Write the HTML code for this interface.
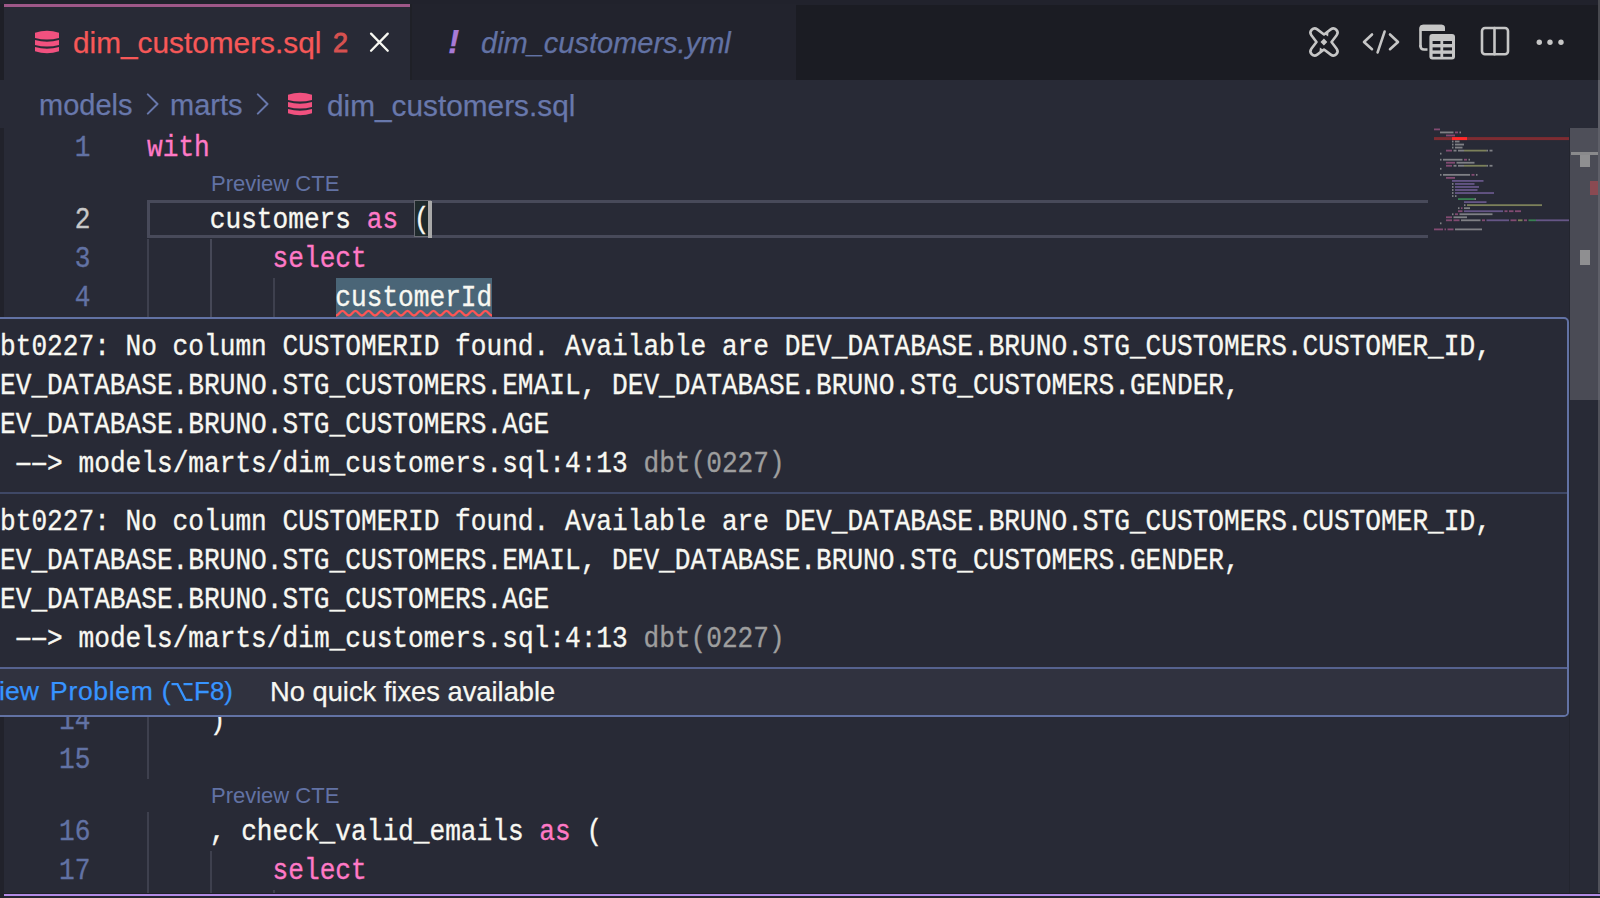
<!DOCTYPE html>
<html><head><meta charset="utf-8">
<style>
html,body{margin:0;padding:0;}
body{width:1600px;height:898px;overflow:hidden;position:relative;background:#282a36;font-family:"Liberation Sans",sans-serif;}
.a{position:absolute;}
.t{position:absolute;white-space:pre;line-height:39px;-webkit-text-stroke:0.25px currentColor;}
.m{position:absolute;font-family:"Liberation Mono",monospace;font-size:30px;line-height:39px;white-space:pre;color:#f8f8f2;transform:scaleX(0.8717);transform-origin:0 0;margin-top:1px;-webkit-text-stroke:0.35px currentColor;}
.k{color:#ff79c6;}
.dd{display:inline-block;transform:scaleX(1.2);}
.ln{position:absolute;left:59px;font-family:"Liberation Mono",monospace;font-size:30px;line-height:39px;white-space:pre;color:#6272a4;transform:scaleX(0.8717);transform-origin:0 0;margin-top:1px;-webkit-text-stroke:0.35px currentColor;}
.g{position:absolute;width:2px;background:#3e404e;}
.cl{position:absolute;left:211px;font-size:22px;line-height:33px;color:#6272a4;white-space:pre;}
</style></head>
<body>
<!-- top band -->
<div class="a" style="left:0;top:0;width:1600px;height:4px;background:#21222c"></div>
<!-- tab bar -->
<div class="a" style="left:0;top:4px;width:1600px;height:76px;background:#1b1c23"></div>
<div class="a" style="left:0;top:4px;width:4px;height:76px;background:#1e1f27"></div>
<!-- active tab -->
<div class="a" style="left:4px;top:4px;width:406px;height:76px;background:#282a36"></div>
<div class="a" style="left:4px;top:4px;width:406px;height:3px;background:#9e5788"></div>
<div class="a" style="left:410px;top:4px;width:2px;height:76px;background:#1f2027"></div>
<!-- inactive tab -->
<div class="a" style="left:412px;top:4px;width:384px;height:76px;background:#22232d"></div>
<div class="a" style="left:796px;top:4px;width:804px;height:1px;background:#21222c"></div>

<!-- tab 1 content -->
<svg class="a" style="left:35px;top:30px" width="24" height="24" viewBox="0 0 24 24">
<g fill="#f1517f"><path d="M0,2.8 Q12,-1.2 24,2.8 V7.9 Q12,11.3 0,7.9 Z"/><path d="M0,10.1 Q12,13.5 24,10.1 V14.9 Q12,18.3 0,14.9 Z"/><path d="M0,17.1 Q12,20.5 24,17.1 V21.2 Q12,25.2 0,21.2 Z"/></g></svg>
<div class="t" id="tab1" style="left:73px;top:23px;font-size:29.8px;color:#f65858">dim_customers.sql</div>
<div class="t" id="tab1n" style="left:333px;top:24px;font-size:27px;-webkit-text-stroke:0.9px currentColor;color:#d65150">2</div>
<svg class="a" style="left:369px;top:32px" width="21" height="21" viewBox="0 0 21 21"><path d="M2.05,1.65 L18.75,18.75 M18.75,1.65 L2.05,18.75" stroke="#f8f8f2" stroke-width="2.3" stroke-linecap="round"/></svg>

<!-- tab 2 content -->
<div class="t" id="excl" style="left:448px;top:22px;font-size:34px;font-weight:bold;font-style:italic;color:#a87ad6">!</div>
<div class="t" id="tab2" style="left:481px;top:23.5px;font-size:29px;font-style:italic;color:#6272a4">dim_customers.yml</div>

<!-- toolbar icons -->
<svg class="a" style="left:1300px;top:20px" width="290" height="46" viewBox="0 0 290 46">
<g fill="none" stroke="#c6c6c6" stroke-width="2.6" stroke-linecap="round" stroke-linejoin="round">
<path transform="translate(8.5,6.5)" d="M15.50,8.00 L22.26,2.86 A4.2,4.2 0 0 1 28.14,8.74 L23.00,15.50 L28.14,22.26 A4.2,4.2 0 0 1 22.26,28.14 L15.50,23.00 L8.74,28.14 A4.2,4.2 0 0 1 2.86,22.26 L8.00,15.50 L2.86,8.74 A4.2,4.2 0 0 1 8.74,2.86 L15.50,8.00 Z"/>
<path d="M72,14.5 L64,22 L72,29.2 M84.6,11.6 L77.6,32.4 M90,14.5 L98,22 L90,29.2"/>
<path d="M120.5,26 V9 Q120.5,6 123.5,6 H142"/><path d="M120.5,26 Q120.5,29.5 124,29.5 H128"/>
<rect x="182" y="8" width="26" height="26.2" rx="3"/>
<path d="M194.5,8 V34.2"/>
</g>
<g fill="#c6c6c6">
<path transform="translate(8.5,6.5)" d="M15.4,12.1 L18.8,15.5 L15.4,18.9 L12,15.5 Z M16,7.4 L20,5.8 L19.6,10 Z M15,23.6 L11,25.2 L11.4,21 Z"/>
<path d="M119.8,8 Q119.8,4.8 123,4.8 H141.5 Q145,4.8 145,8 V11 H119.8 Z"/>
<rect x="127.5" y="12.5" width="29" height="28.5" rx="4" fill="#1b1c23"/>
<rect x="129.4" y="14.1" width="25.6" height="25.5" rx="3"/>
<circle cx="239.3" cy="22.2" r="2.7"/><circle cx="250" cy="22.2" r="2.7"/><circle cx="261" cy="22.2" r="2.7"/>
</g>
<g fill="#1b1c23">
<rect x="132.6" y="21" width="7.8" height="3"/><rect x="143.2" y="21" width="8.8" height="3"/>
<rect x="132.6" y="27.4" width="7.8" height="3"/><rect x="143.2" y="27.4" width="8.8" height="3"/>
<rect x="132.6" y="33.8" width="7.8" height="3"/><rect x="143.2" y="33.8" width="8.8" height="3"/>
</g>
</svg>

<!-- breadcrumbs -->
<div class="t" id="bc1" style="left:39px;top:86px;font-size:29px;color:#6878ac">models</div>
<div class="t" id="bc2" style="left:170px;top:86px;font-size:29px;color:#6878ac">marts</div>
<div class="t" id="bc3" style="left:327px;top:86px;font-size:29.8px;color:#6878ac">dim_customers.sql</div>
<svg class="a" style="left:140px;top:88px" width="140" height="32" viewBox="0 0 140 32">
<path d="M7.8,6.4 L17.5,16 L7.8,25.6 M117.8,6.4 L127.5,16 L117.8,25.6" fill="none" stroke="#6878ac" stroke-width="2" stroke-linecap="round" stroke-linejoin="round"/></svg>
<svg class="a" style="left:288px;top:92px" width="24" height="24" viewBox="0 0 24 24">
<g fill="#f1517f"><path d="M0,2.8 Q12,-1.2 24,2.8 V7.9 Q12,11.3 0,7.9 Z"/><path d="M0,10.1 Q12,13.5 24,10.1 V14.9 Q12,18.3 0,14.9 Z"/><path d="M0,17.1 Q12,20.5 24,17.1 V21.2 Q12,25.2 0,21.2 Z"/></g></svg>

<!-- editor left strip -->
<div class="a" style="left:0;top:128px;width:4px;height:770px;background:#21222b"></div>

<!-- current line box -->
<div class="a" style="left:147px;top:200px;width:1278px;height:32px;border:3px solid #484a5a;border-top-width:3.5px;border-right:none"></div>

<!-- indent guides -->
<div class="g" style="left:147px;top:239px;height:78px"></div>
<div class="g" style="left:210px;top:239px;height:78px;background:#464857"></div>
<div class="g" style="left:273px;top:278px;height:39px"></div>
<div class="g" style="left:147px;top:701px;height:78px"></div>
<div class="g" style="left:147px;top:812px;height:86px"></div>
<div class="g" style="left:210px;top:851px;height:47px"></div>
<div class="g" style="left:273px;top:890px;height:8px"></div>

<!-- selection -->
<div class="a" style="left:336px;top:278px;width:156px;height:39px;background:#4a6577"></div>
<!-- bracket match + cursor -->
<div class="a" style="left:414px;top:200px;width:15px;height:35px;border:1px solid #6a6b73;background:#1f2a2c"></div>
<div class="a" style="left:428px;top:201px;width:4px;height:37px;background:#a9a9a9"></div>

<!-- line numbers -->
<div class="ln" style="top:128px"> 1</div>
<div class="ln" style="top:200px;color:#c8c8c8"> 2</div>
<div class="ln" style="top:239px"> 3</div>
<div class="ln" style="top:278px"> 4</div>
<div class="ln" style="top:701px">14</div>
<div class="ln" style="top:740px">15</div>
<div class="ln" style="top:812px">16</div>
<div class="ln" style="top:851px">17</div>

<!-- code -->
<div class="m" style="left:147px;top:128px"><span class="k">with</span></div>
<div class="cl" style="top:167px">Preview CTE</div>
<div class="m" style="left:147px;top:200px">    customers <span class="k">as</span> (</div>
<div class="m" style="left:147px;top:239px">        <span class="k">select</span></div>
<div class="m" style="left:147px;top:278px">            customerId</div>
<div class="m" style="left:147px;top:701px">    )</div>
<div class="cl" style="top:779px">Preview CTE</div>
<div class="m" style="left:147px;top:812px">    , check_valid_emails <span class="k">as</span> (</div>
<div class="m" style="left:147px;top:851px">        <span class="k">select</span></div>

<!-- squiggle -->
<svg class="a" style="left:336px;top:309px" width="156" height="9" viewBox="0 0 156 9">
<path d="M0,6.5 C2.6,6.5 3.9,1.8 6.5,1.8 C9.1,1.8 10.4,6.5 13.0,6.5 C15.6,6.5 16.9,1.8 19.5,1.8 C22.1,1.8 23.4,6.5 26.0,6.5 C28.6,6.5 29.9,1.8 32.5,1.8 C35.1,1.8 36.4,6.5 39.0,6.5 C41.6,6.5 42.9,1.8 45.5,1.8 C48.1,1.8 49.4,6.5 52.0,6.5 C54.6,6.5 55.9,1.8 58.5,1.8 C61.1,1.8 62.4,6.5 65.0,6.5 C67.6,6.5 68.9,1.8 71.5,1.8 C74.1,1.8 75.4,6.5 78.0,6.5 C80.6,6.5 81.9,1.8 84.5,1.8 C87.1,1.8 88.4,6.5 91.0,6.5 C93.6,6.5 94.9,1.8 97.5,1.8 C100.1,1.8 101.4,6.5 104.0,6.5 C106.6,6.5 107.9,1.8 110.5,1.8 C113.1,1.8 114.4,6.5 117.0,6.5 C119.6,6.5 120.9,1.8 123.5,1.8 C126.1,1.8 127.4,6.5 130.0,6.5 C132.6,6.5 133.9,1.8 136.5,1.8 C139.1,1.8 140.4,6.5 143.0,6.5 C145.6,6.5 146.9,1.8 149.5,1.8 C152.1,1.8 153.4,6.5 156.0,6.5" fill="none" stroke="#ff5555" stroke-width="2.3"/></svg>

<!--MINIMAP--><svg class="a" style="left:0;top:0" width="1600" height="898" viewBox="0 0 1600 898"><rect x="1434" y="137.09" width="135" height="3" fill="#7e2c32"/><rect x="1452" y="137.09" width="15" height="3" fill="#ff2a2a"/><rect x="1434.0" y="128.50" width="6.0" height="1.8" fill="#ff79c6" opacity="0.42"/><rect x="1440.0" y="131.53" width="13.5" height="1.8" fill="#f8f8f2" opacity="0.42"/><rect x="1455.0" y="131.53" width="3.0" height="1.8" fill="#ff79c6" opacity="0.42"/><rect x="1459.5" y="131.53" width="1.5" height="1.8" fill="#f8f8f2" opacity="0.42"/><rect x="1446.0" y="134.56" width="9.0" height="1.8" fill="#ff79c6" opacity="0.42"/><rect x="1452.0" y="140.62" width="1.5" height="1.8" fill="#f8f8f2" opacity="0.42"/><rect x="1455.0" y="140.62" width="4.5" height="1.8" fill="#f8f8f2" opacity="0.42"/><rect x="1452.0" y="143.65" width="1.5" height="1.8" fill="#f8f8f2" opacity="0.42"/><rect x="1455.0" y="143.65" width="9.0" height="1.8" fill="#f8f8f2" opacity="0.42"/><rect x="1452.0" y="146.68" width="1.5" height="1.8" fill="#f8f8f2" opacity="0.42"/><rect x="1455.0" y="146.68" width="7.5" height="1.8" fill="#f8f8f2" opacity="0.42"/><rect x="1446.0" y="149.71" width="6.0" height="1.8" fill="#ff79c6" opacity="0.42"/><rect x="1453.5" y="149.71" width="3.0" height="1.8" fill="#f8f8f2" opacity="0.42"/><rect x="1458.0" y="149.71" width="6.0" height="1.8" fill="#f8f8f2" opacity="0.42"/><rect x="1464.0" y="149.71" width="22.5" height="1.8" fill="#f1fa8c" opacity="0.42"/><rect x="1486.5" y="149.71" width="1.5" height="1.8" fill="#f8f8f2" opacity="0.42"/><rect x="1489.5" y="149.71" width="3.0" height="1.8" fill="#f8f8f2" opacity="0.42"/><rect x="1440.0" y="152.74" width="1.5" height="1.8" fill="#f8f8f2" opacity="0.42"/><rect x="1440.0" y="158.80" width="1.5" height="1.8" fill="#f8f8f2" opacity="0.42"/><rect x="1443.0" y="158.80" width="19.5" height="1.8" fill="#f8f8f2" opacity="0.42"/><rect x="1464.0" y="158.80" width="3.0" height="1.8" fill="#ff79c6" opacity="0.42"/><rect x="1468.5" y="158.80" width="1.5" height="1.8" fill="#f8f8f2" opacity="0.42"/><rect x="1446.0" y="161.83" width="9.0" height="1.8" fill="#ff79c6" opacity="0.42"/><rect x="1456.5" y="161.83" width="18.0" height="1.8" fill="#f8f8f2" opacity="0.42"/><rect x="1446.0" y="164.86" width="6.0" height="1.8" fill="#ff79c6" opacity="0.42"/><rect x="1453.5" y="164.86" width="3.0" height="1.8" fill="#f8f8f2" opacity="0.42"/><rect x="1458.0" y="164.86" width="6.0" height="1.8" fill="#f8f8f2" opacity="0.42"/><rect x="1464.0" y="164.86" width="22.5" height="1.8" fill="#f1fa8c" opacity="0.42"/><rect x="1486.5" y="164.86" width="1.5" height="1.8" fill="#f8f8f2" opacity="0.42"/><rect x="1489.5" y="164.86" width="3.0" height="1.8" fill="#f8f8f2" opacity="0.42"/><rect x="1440.0" y="167.89" width="1.5" height="1.8" fill="#f8f8f2" opacity="0.42"/><rect x="1440.0" y="173.95" width="1.5" height="1.8" fill="#f8f8f2" opacity="0.42"/><rect x="1443.0" y="173.95" width="27.0" height="1.8" fill="#f8f8f2" opacity="0.42"/><rect x="1471.5" y="173.95" width="3.0" height="1.8" fill="#ff79c6" opacity="0.42"/><rect x="1476.0" y="173.95" width="1.5" height="1.8" fill="#f8f8f2" opacity="0.42"/><rect x="1446.0" y="176.98" width="9.0" height="1.8" fill="#ff79c6" opacity="0.42"/><rect x="1452.0" y="180.01" width="31.5" height="1.8" fill="#bd93f9" opacity="0.42"/><rect x="1452.0" y="183.04" width="1.5" height="1.8" fill="#f8f8f2" opacity="0.42"/><rect x="1455.0" y="183.04" width="19.5" height="1.8" fill="#bd93f9" opacity="0.42"/><rect x="1452.0" y="186.07" width="1.5" height="1.8" fill="#f8f8f2" opacity="0.42"/><rect x="1455.0" y="186.07" width="24.0" height="1.8" fill="#bd93f9" opacity="0.42"/><rect x="1452.0" y="189.10" width="1.5" height="1.8" fill="#f8f8f2" opacity="0.42"/><rect x="1455.0" y="189.10" width="22.5" height="1.8" fill="#bd93f9" opacity="0.42"/><rect x="1452.0" y="192.13" width="1.5" height="1.8" fill="#f8f8f2" opacity="0.42"/><rect x="1455.0" y="192.13" width="39.0" height="1.8" fill="#bd93f9" opacity="0.42"/><rect x="1452.0" y="195.16" width="1.5" height="1.8" fill="#f8f8f2" opacity="0.42"/><rect x="1455.0" y="195.16" width="1.5" height="1.8" fill="#f8f8f2" opacity="0.42"/><rect x="1458.0" y="198.19" width="16.5" height="1.8" fill="#50fa7b" opacity="0.42"/><rect x="1474.5" y="198.19" width="1.5" height="1.8" fill="#f8f8f2" opacity="0.42"/><rect x="1464.0" y="201.22" width="22.5" height="1.8" fill="#bd93f9" opacity="0.42"/><rect x="1464.0" y="204.25" width="1.5" height="1.8" fill="#f8f8f2" opacity="0.42"/><rect x="1467.0" y="204.25" width="75.0" height="1.8" fill="#f1fa8c" opacity="0.42"/><rect x="1458.0" y="207.28" width="1.5" height="1.8" fill="#f8f8f2" opacity="0.42"/><rect x="1461.0" y="207.28" width="1.5" height="1.8" fill="#ff79c6" opacity="0.42"/><rect x="1464.0" y="207.28" width="6.0" height="1.8" fill="#f8f8f2" opacity="0.42"/><rect x="1458.0" y="210.31" width="4.5" height="1.8" fill="#ff79c6" opacity="0.42"/><rect x="1464.0" y="210.31" width="39.0" height="1.8" fill="#bd93f9" opacity="0.42"/><rect x="1504.5" y="210.31" width="3.0" height="1.8" fill="#ff79c6" opacity="0.42"/><rect x="1509.0" y="210.31" width="4.5" height="1.8" fill="#ff79c6" opacity="0.42"/><rect x="1515.0" y="210.31" width="6.0" height="1.8" fill="#ff79c6" opacity="0.42"/><rect x="1452.0" y="213.34" width="1.5" height="1.8" fill="#f8f8f2" opacity="0.42"/><rect x="1455.0" y="213.34" width="3.0" height="1.8" fill="#ff79c6" opacity="0.42"/><rect x="1459.5" y="213.34" width="33.0" height="1.8" fill="#f8f8f2" opacity="0.42"/><rect x="1446.0" y="216.37" width="6.0" height="1.8" fill="#ff79c6" opacity="0.42"/><rect x="1453.5" y="216.37" width="13.5" height="1.8" fill="#f8f8f2" opacity="0.42"/><rect x="1446.0" y="219.40" width="6.0" height="1.8" fill="#ff79c6" opacity="0.42"/><rect x="1453.5" y="219.40" width="6.0" height="1.8" fill="#ff79c6" opacity="0.42"/><rect x="1461.0" y="219.40" width="19.5" height="1.8" fill="#f8f8f2" opacity="0.42"/><rect x="1482.0" y="219.40" width="3.0" height="1.8" fill="#ff79c6" opacity="0.42"/><rect x="1486.5" y="219.40" width="22.5" height="1.8" fill="#bd93f9" opacity="0.42"/><rect x="1510.5" y="219.40" width="6.0" height="1.8" fill="#ff79c6" opacity="0.42"/><rect x="1518.0" y="219.40" width="4.5" height="1.8" fill="#f1fa8c" opacity="0.42"/><rect x="1524.0" y="219.40" width="3.0" height="1.8" fill="#ff79c6" opacity="0.42"/><rect x="1528.5" y="219.40" width="7.5" height="1.8" fill="#50fa7b" opacity="0.42"/><rect x="1536.0" y="219.40" width="33.0" height="1.8" fill="#bd93f9" opacity="0.42"/><rect x="1440.0" y="222.43" width="1.5" height="1.8" fill="#f8f8f2" opacity="0.42"/><rect x="1434.0" y="228.49" width="9.0" height="1.8" fill="#ff79c6" opacity="0.42"/><rect x="1444.5" y="228.49" width="1.5" height="1.8" fill="#ff79c6" opacity="0.42"/><rect x="1447.5" y="228.49" width="6.0" height="1.8" fill="#ff79c6" opacity="0.42"/><rect x="1455.0" y="228.49" width="27.0" height="1.8" fill="#f8f8f2" opacity="0.42"/></svg><!--/MINIMAP-->

<!-- scrollbar -->
<div class="a" style="left:1569px;top:128px;width:1px;height:770px;background:#23252f"></div>
<div class="a" style="left:1570px;top:128px;width:28px;height:272px;background:#4a4b55"></div>
<div class="a" style="left:1570px;top:128px;width:28px;height:24px;background:#4e4f59"></div>
<div class="a" style="left:1571px;top:152px;width:27px;height:3px;background:#8a8a8c"></div>
<div class="a" style="left:1580px;top:155px;width:10px;height:12px;background:#8f8f91"></div>
<div class="a" style="left:1590px;top:181px;width:8px;height:14px;background:#8a4a52"></div>
<div class="a" style="left:1580px;top:250px;width:10px;height:15px;background:#8f8f91"></div>
<div class="a" style="left:1598px;top:0;width:2px;height:80px;background:#47484e"></div>
<div class="a" style="left:1598px;top:80px;width:2px;height:320px;background:#5e5f68"></div>
<div class="a" style="left:1598px;top:400px;width:2px;height:498px;background:#50515a"></div>

<!-- hover widget -->
<div class="a" style="left:-10px;top:317px;width:1574.5px;height:396px;background:#282a36;border:2px solid #6272a4;border-radius:0 5px 5px 0"></div>
<div class="a" style="left:0;top:492px;width:1567px;height:2px;background:#3f4866"></div>
<div class="a" style="left:0;top:667px;width:1567px;height:48px;background:#30323f;border-radius:0 0 4px 0"></div>
<div class="a" style="left:0;top:667px;width:1567px;height:2px;background:#56628f"></div>

<div class="m" style="left:0.3px;top:327px">bt0227: No column CUSTOMERID found. Available are DEV_DATABASE.BRUNO.STG_CUSTOMERS.CUSTOMER_ID,
EV_DATABASE.BRUNO.STG_CUSTOMERS.EMAIL, DEV_DATABASE.BRUNO.STG_CUSTOMERS.GENDER,
EV_DATABASE.BRUNO.STG_CUSTOMERS.AGE
 <span class="dd">–</span><span class="dd">–</span>&gt; models/marts/dim_customers.sql:4:13 <span style="color:#9e9e9e">dbt(0227)</span></div>
<div class="m" style="left:0.3px;top:502px">bt0227: No column CUSTOMERID found. Available are DEV_DATABASE.BRUNO.STG_CUSTOMERS.CUSTOMER_ID,
EV_DATABASE.BRUNO.STG_CUSTOMERS.EMAIL, DEV_DATABASE.BRUNO.STG_CUSTOMERS.GENDER,
EV_DATABASE.BRUNO.STG_CUSTOMERS.AGE
 <span class="dd">–</span><span class="dd">–</span>&gt; models/marts/dim_customers.sql:4:13 <span style="color:#9e9e9e">dbt(0227)</span></div>

<div class="t" id="vp0" style="left:-1px;top:672px;font-size:26.5px;color:#3794ff">iew</div><div class="t" id="vp" style="left:50px;top:672px;font-size:26.5px;letter-spacing:0.7px;color:#3794ff">Problem (</div>
<svg class="a" style="left:171px;top:683px" width="22" height="18" viewBox="0 0 22 18"><path d="M0.5,1.2 H6.5 L14.5,16.8 H21.5 M12.5,1.2 H21.5" fill="none" stroke="#3794ff" stroke-width="2.3"/></svg>
<div class="t" id="vp2" style="left:194px;top:672px;font-size:26px;color:#3794ff">F8)</div>
<div class="t" id="nq" style="left:270px;top:672px;font-size:27.3px;color:#f8f8f2">No quick fixes available</div>

<!-- bottom purple line -->
<div class="a" style="left:4px;top:893px;width:1596px;height:1px;background:#1d2226"></div>
<div class="a" style="left:4px;top:894px;width:1596px;height:2px;background:#b48ae6"></div>
<div class="a" style="left:4px;top:896px;width:1596px;height:2px;background:#262731"></div>
</body></html>
